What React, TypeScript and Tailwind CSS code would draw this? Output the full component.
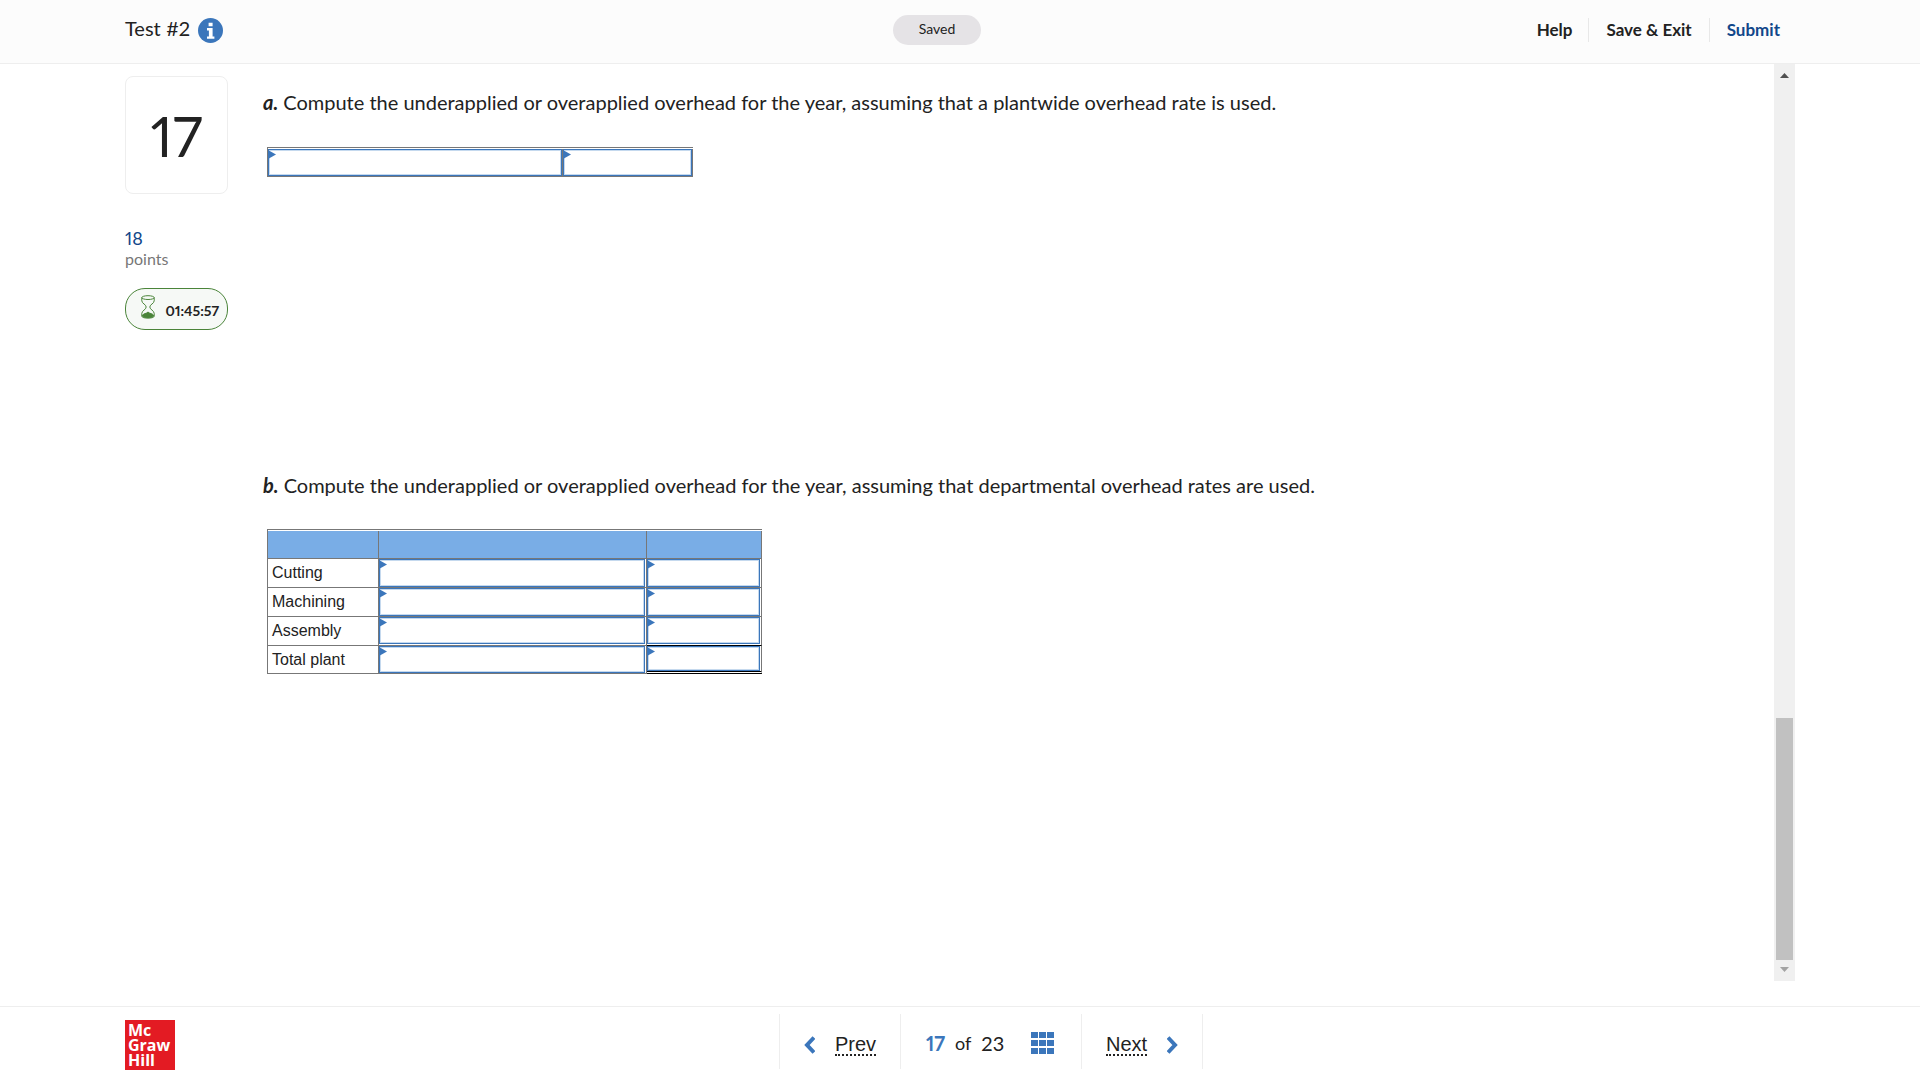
import clsx from "clsx";

const rows = ["Cutting", "Machining", "Assembly", "Total plant"];

interface CellInputProps {
  label: string;
  className?: string;
}

function CellInput({ label, className }: CellInputProps) {
  return (
    <div className={clsx("relative", className)}>
      <input
        type="text"
        aria-label={label}
        className="block h-full w-full border border-[#3b76bb] bg-white px-2 text-base text-[#222] shadow-[inset_0_0_0_1px_#c5d9ee] outline-none"
      />
      <svg className="absolute left-0 top-0" width="8" height="10" viewBox="0 0 8 10" aria-hidden="true">
        <path d="M0 1L8 5.5L0 10z" fill="#3b76bb" />
      </svg>
    </div>
  );
}

function InfoIcon() {
  return (
    <svg width="25" height="25" viewBox="0 0 25 25" aria-hidden="true">
      <circle cx="12.5" cy="12.5" r="12.5" fill="#3b76bb" />
      <path d="M10.6 4.8h4v3.4h-4zM9 10h5.6v8.4H16.4v2.4H9v-2.4h1.9v-6H9z" fill="#fff" />
    </svg>
  );
}

function HourglassIcon() {
  return (
    <svg className="mb-1" width="14" height="24" viewBox="0 0 14 24" fill="none" stroke="#4a8439" aria-hidden="true">
      <ellipse cx="7" cy="2.6" rx="6.2" ry="1.9" />
      <path d="M.8 2.6v3.2C.8 8.6 5.2 9.4 5.2 12S.8 15.6 .8 18.4v2.8c0 2.6 12.4 2.6 12.4 0v-2.8C13.2 15.6 8.8 14.6 8.8 12s4.4-3.4 4.4-6.2V2.6" />
      <path d="M7 17c1 1.5 5 1.700 5.500 3.200v1c-1 1.800-10 1.800-11 0v-1c.5-1.500 4.500-1.700 5.500-3.200z" fill="#4a8439" />
    </svg>
  );
}

function Header() {
  return (
    <header className="grid h-16 shrink-0 grid-cols-[1fr_auto_1fr] items-center border-b border-[#eee] bg-[#fcfcfc] pb-[3px] pl-[125px] pr-[140px]">
      <div className="flex items-center gap-2">
        <h1 className="pb-1 text-xl leading-6">Test #2</h1>
        <button type="button" aria-label="Test information">
          <InfoIcon />
        </button>
      </div>
      <div className="mr-[31px] flex h-[30px] w-[88px] items-center justify-center rounded-full bg-[#e5e3e6] pb-0.5 text-sm">
        Saved
      </div>
      <nav className="flex justify-end text-[17px] font-bold leading-6">
        <a href="#help" className="border-r border-[#e8e8e8] px-4">Help</a>
        <a href="#exit" className="border-r border-[#e8e8e8] px-[17px]">Save &amp; Exit</a>
        <a href="#submit" className="pl-[17px] text-[#12478a]">Submit</a>
      </nav>
    </header>
  );
}

function Sidebar() {
  return (
    <aside className="w-[103px] shrink-0 pt-3">
      <div className="flex h-[118px] items-center justify-center rounded-lg border border-[#eee] pt-0.5 text-[56px]">
        17
      </div>
      <div className="mt-8 text-lg leading-6 text-[#12478a]">18</div>
      <div className="text-base leading-[18px] text-[#777]">points</div>
      <div className="mt-5 flex h-[42px] items-center justify-between rounded-[20px] border border-[#4a8439] bg-[#f6f9f6] pl-[15px] pr-2">
        <HourglassIcon />
        <span className="pt-1 text-sm font-bold">01:45:57</span>
      </div>
    </aside>
  );
}

function PlantwideTable() {
  return (
    <div className="ml-1 w-[426px] border-l border-t border-[#777] pt-px">
      <table className="w-full table-fixed border-separate border-spacing-0">
        <tbody>
          <tr>
            <td className="w-[295px] border-b border-r border-[#777] p-0">
              <CellInput label="Overhead description" className="h-[27px]" />
            </td>
            <td className="border-b border-r border-[#777] p-0">
              <CellInput label="Overhead amount" className="h-[27px]" />
            </td>
          </tr>
        </tbody>
      </table>
    </div>
  );
}

function DepartmentTable() {
  return (
    <div className="ml-1 w-[495px] border-l border-t border-[#777] pt-px">
      <table className="w-full table-fixed border-separate border-spacing-0 font-['Liberation_Sans',Arial,sans-serif] text-base leading-5">
        <thead>
          <tr className="h-7 bg-[#79ade6]">
            <th className="w-[111px] border-b border-r border-[#777] p-0"></th>
            <th className="w-[268px] border-b border-r border-[#777] p-0"></th>
            <th className="border-b border-r border-[#777] p-0"></th>
          </tr>
        </thead>
        <tbody>
          {rows.map((row, i) => {
            const last = i === rows.length - 1;
            const beforeTotal = i === rows.length - 2;
            return (
              <tr key={row}>
                <th scope="row" className="border-b border-r border-[#777] p-0 pl-1 text-left font-normal">
                  {row}
                </th>
                <td className={clsx("border-b border-r border-[#777] p-0 pr-px", beforeTotal && "pb-px")}>
                  <CellInput label={`${row} description`} className={last || beforeTotal ? "h-[27px]" : "h-7"} />
                </td>
                <td
                  className={clsx(
                    "border-r border-[#777] p-0 pr-px",
                    last ? "border-b-3 border-b-black [border-bottom-style:double]" : "border-b",
                    beforeTotal && "border-b-black pb-px"
                  )}
                >
                  <CellInput
                    label={`${row} amount`}
                    className={last ? "h-[25px]" : beforeTotal ? "h-[27px]" : "h-7"}
                  />
                </td>
              </tr>
            );
          })}
        </tbody>
      </table>
    </div>
  );
}

function Scrollbar() {
  return (
    <div className="flex w-[21px] shrink-0 flex-col items-center bg-[#f0f0f0]" aria-hidden="true">
      <svg className="shrink-0" width="21" height="21" viewBox="0 0 21 21">
        <path d="M6 14L10.5 9L15 14z" fill="#505050" />
      </svg>
      <div className="grow-[633]" />
      <div className="w-[17px] grow-[242] bg-[#c1c1c1]" />
      <svg className="shrink-0" width="21" height="21" viewBox="0 0 21 21">
        <path d="M6 7L10.5 12L15 7z" fill="#a3a3a3" />
      </svg>
    </div>
  );
}

function Footer() {
  return (
    <footer className="flex h-[74px] shrink-0 items-start gap-3 border-t border-[#eee] px-[125px]">
      <div className="mt-[13px] size-[50px] bg-[#e31b23] pl-[3px] pt-[3px] font-['Open_Sans',sans-serif] text-base font-bold leading-[15px] text-white">
        Mc
        <br />
        Graw
        <br />
        Hill
      </div>
      <nav className="mt-[7px] flex flex-1 justify-center">
        <div className="flex h-[55px] divide-x divide-[#eee] border-x border-[#eee] text-xl">
          <button type="button" className="flex w-[121px] items-center gap-5 pl-6 pt-[7px] font-['Liberation_Sans',Arial,sans-serif]">
            <svg width="11" height="18" viewBox="0 0 11 18" fill="none" stroke="#3b76bb" strokeWidth="4" aria-hidden="true">
              <path d="M10 1.5L3 9L10 16.5" />
            </svg>
            <span className="border-b-2 border-dotted border-[#222] leading-5">Prev</span>
          </button>
          <div className="flex w-[181px] items-center pl-[25px] pt-[3px]">
            <span className="font-bold text-[#3b76bb]">17</span>
            <span className="ml-2.5 text-lg">of</span>
            <span className="ml-2.5">23</span>
            <button type="button" aria-label="Question list" className="ml-auto mr-[27px]">
              <svg width="23" height="22" viewBox="0 0 23 22" fill="#3b76bb" aria-hidden="true">
                <path d="M0 0h7v6H0zM8 0h7v6H8zM16 0h7v6h-7zM0 8h7v6H0zM8 8h7v6H8zM16 8h7v6h-7zM0 16h7v6H0zM8 16h7v6H8zM16 16h7v6h-7z" />
              </svg>
            </button>
          </div>
          <button type="button" className="flex w-[120px] items-center gap-5 pl-6 pt-[7px] font-['Liberation_Sans',Arial,sans-serif]">
            <span className="border-b-2 border-dotted border-[#222] leading-5">Next</span>
            <svg width="11" height="18" viewBox="0 0 11 18" fill="none" stroke="#3b76bb" strokeWidth="4" aria-hidden="true">
              <path d="M1 1.5L8 9L1 16.5" />
            </svg>
          </button>
        </div>
      </nav>
    </footer>
  );
}

export default function App() {
  return (
    <div className="flex h-screen flex-col bg-white font-['Lato',sans-serif] proportional-nums text-[#222]">
      <Header />
      <main className="flex min-h-0 flex-1 px-[125px] pb-[25px]">
        <Sidebar />
        <section className="ml-[35px] flex-1 pt-[26px] text-xl leading-6">
          <p>
            <strong className="italic">a.</strong> Compute the underapplied or overapplied overhead for the year, assuming that a plantwide overhead rate is used.
          </p>
          <div className="mt-[33px]">
            <PlantwideTable />
          </div>
          <p className="mt-[296px]">
            <strong className="italic">b.</strong> Compute the underapplied or overapplied overhead for the year, assuming that departmental overhead rates are used.
          </p>
          <div className="mt-8">
            <DepartmentTable />
          </div>
        </section>
        <Scrollbar />
      </main>
      <Footer />
    </div>
  );
}
